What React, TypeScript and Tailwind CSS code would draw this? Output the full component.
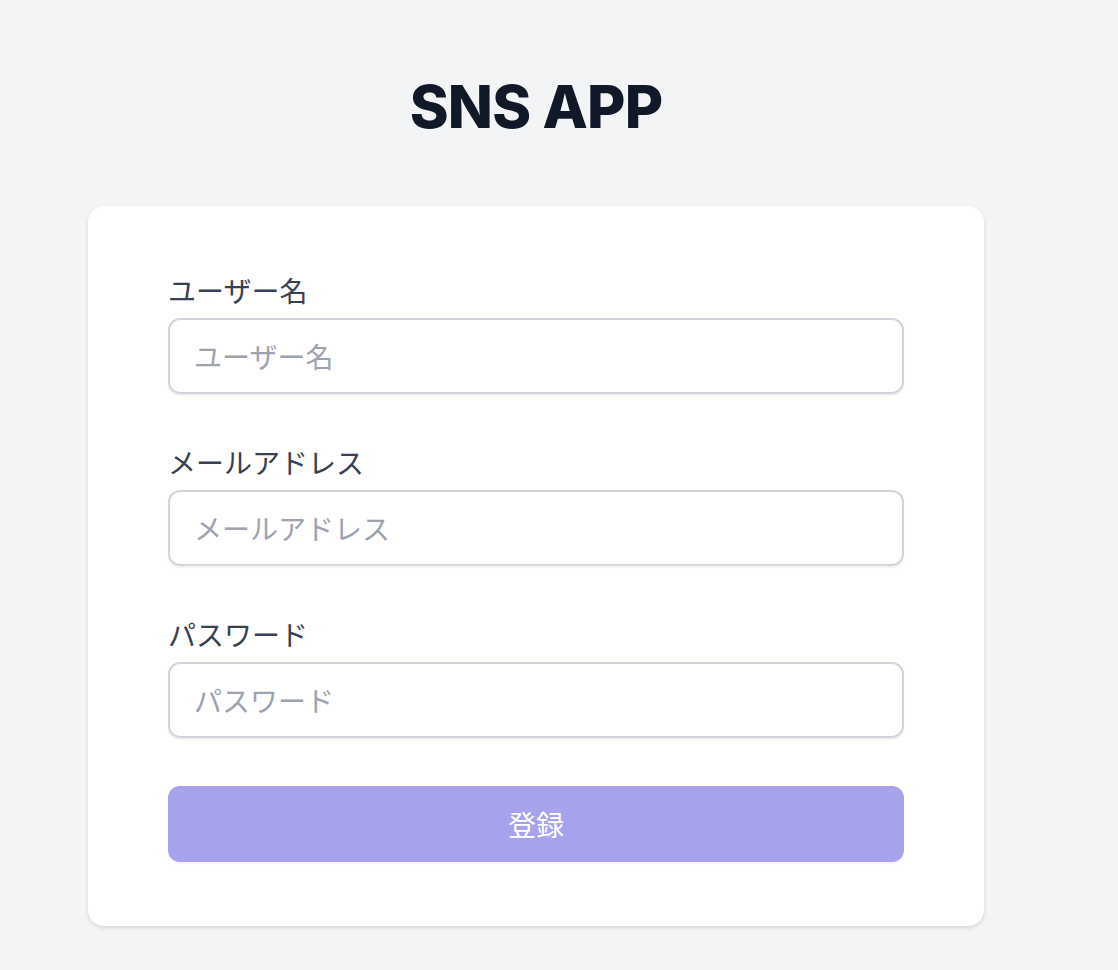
const fields = [
  { id: "username", label: "ユーザー名", type: "text" },
  { id: "email", label: "メールアドレス", type: "email" },
  { id: "password", label: "パスワード", type: "password" },
];

const App = () => {
  return (
    <div className="min-h-screen bg-[#f3f4f6] pt-[71px] font-['Inter','Noto_Sans_CJK_JP',sans-serif]">
      <div className="w-[896px] ml-[88px]">
        <h2 className="text-center text-[59px] leading-[72px] font-extrabold tracking-[-0.8px] text-[#111827] font-['Inter',sans-serif]">
          SNS APP
        </h2>

        <div className="mt-[63px] bg-white rounded-2xl shadow-[0_2px_4px_rgba(0,0,0,0.12)] px-20 py-16">
          <form className="flex flex-col gap-12" onSubmit={(e) => e.preventDefault()}>
            {fields.map((field) => (
              <div key={field.id}>
                <label
                  htmlFor={field.id}
                  className="block text-[28px] leading-[40px] text-[#374151] font-['Noto_Sans_CJK_JP',sans-serif]"
                >
                  {field.label}
                </label>
                <input
                  id={field.id}
                  name={field.id}
                  type={field.type === "password" ? "text" : field.type}
                  placeholder={field.label}
                  className="mt-2 block w-full h-[76px] px-6 border-2 border-[#d1d5db] rounded-xl shadow-[0_2px_2px_rgba(0,0,0,0.06)] text-[28px] leading-[40px] text-[#111827] placeholder:text-[#9ca3af] font-['Noto_Sans_CJK_JP',sans-serif] outline-none"
                />
              </div>
            ))}

            <button
              type="submit"
              className="w-full h-[76px] rounded-xl bg-[#a6a2ec] text-white text-[28px] leading-[40px] font-['Noto_Sans_CJK_JP',sans-serif] shadow-[0_2px_2px_rgba(0,0,0,0.05)]"
            >
              登録
            </button>
          </form>
        </div>
      </div>
    </div>
  );
};

export default App;
